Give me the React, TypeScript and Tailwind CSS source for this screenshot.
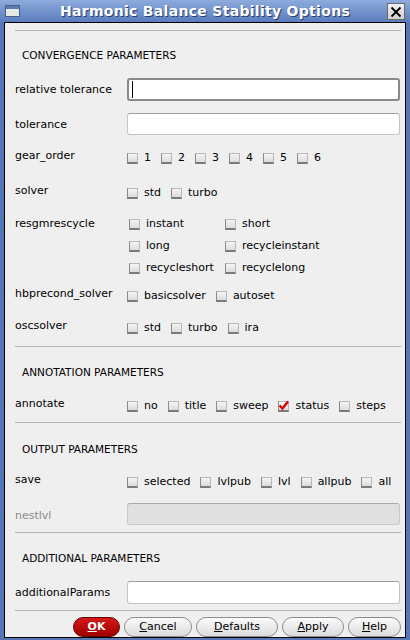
import React from "react"

const font = { fontFamily: '"DejaVu Sans", "Liberation Sans", sans-serif' }

function Box({ checked = false }: { checked?: boolean }) {
  return (
    <span className="relative inline-block w-[11px] h-[11px] shrink-0 bg-gradient-to-b from-[#f4f4f4] to-[#dcdcdc] border border-[#b8b8b8] border-b-2 border-b-[#7a7a7a] border-l-[#8a8a8a]">
      {checked && (
        <svg viewBox="0 0 11 11" className="absolute -left-px -top-[2px] w-[11px] h-[11px]">
          <path d="M1.5 5.5 L4.5 8.5 L10 1.5" fill="none" stroke="#d40000" strokeWidth="2.4" />
        </svg>
      )}
    </span>
  )
}

function Check({ label, checked }: { label: string; checked?: boolean }) {
  return (
    <span className="flex items-center gap-[6px]">
      <Box checked={checked} />
      <span>{label}</span>
    </span>
  )
}

function Heading({ text, mt }: { text: string; mt: string }) {
  return <div className={`pl-[17px] h-[20px] flex items-center text-[10.5px] ${mt}`}>{text}</div>
}

function Sep({ mt }: { mt: string }) {
  return <div className={`h-px bg-[#b4b4b4] ml-[10px] ${mt}`} />
}

function CheckRow({ label, items, mt, checkedIdx = -1 }: { label: string; items: string[]; mt: string; checkedIdx?: number }) {
  return (
    <div className={`flex h-[20px] ${mt}`}>
      <div className="w-[122px] pl-[10px] flex items-center">{label}</div>
      <div className="flex items-center gap-[10px] pt-[5px]">
        {items.map((it, i) => (
          <Check key={it} label={it} checked={i === checkedIdx} />
        ))}
      </div>
    </div>
  )
}

function InputRow({ label, mt, h, focused, disabled }: { label: string; mt: string; h: string; focused?: boolean; disabled?: boolean }) {
  return (
    <div className={`flex items-center ${mt} ${h}`}>
      <div className={`w-[122px] pl-[10px] pt-[2px] ${disabled ? "text-[#8a8a8a] pt-[5px]" : ""}`}>{label}</div>
      <div
        className={`h-full w-[273px] rounded-[3px] flex items-center ${
          disabled
            ? "bg-[#e0e0e0] border border-[#c8c8c8] border-t-[#a8a8a8]"
            : focused
            ? "bg-white border-2 border-[#8a8a8a]"
            : "bg-white border border-[#c4c4c4] border-t-[#a0a0a0]"
        }`}
      >
        {focused && <span className="ml-[3px] w-px h-[17px] bg-black" />}
      </div>
    </div>
  )
}

function Btn({ children, w, ok }: { children: React.ReactNode; w: string; ok?: boolean }) {
  return (
    <div
      className={`${w} h-[20px] rounded-full flex items-center justify-center ${
        ok
          ? "bg-gradient-to-b from-[#d81818] to-[#a00000] border border-[#600000] text-white font-bold"
          : "bg-gradient-to-b from-[#fbfbfb] to-[#dcdcdc] border border-[#8c8c8c]"
      }`}
    >
      {children}
    </div>
  )
}

export default function App() {
  return (
    <div className="w-[410px] h-[640px] bg-[#5577b8] flex flex-col text-[11px] text-black" style={font}>
      {/* title bar */}
      <div className="h-[22px] shrink-0 relative flex items-center justify-center bg-gradient-to-b from-[#8eabdc] to-[#5a7dbe]">
        <div className="absolute left-[5px] top-[5px] w-[15px] h-[12px] border border-[#4a5f86] bg-[#e6e9e2]">
          <div className="h-[3px] bg-[#5d7bb0]" />
        </div>
        <span className="text-white font-bold text-[14px] tracking-[0.3px] [text-shadow:1px_1px_0_#2a3f70]">
          Harmonic Balance Stability Options
        </span>
        <div className="absolute right-[5px] top-[3px] w-[18px] h-[17px] bg-gradient-to-b from-[#f0f0f0] to-[#d0d0d0] border border-[#6a6a6a] flex items-center justify-center">
          <svg viewBox="0 0 12 12" className="w-[12px] h-[12px]">
            <path d="M1.5 1.5 L10.5 10.5 M10.5 1.5 L1.5 10.5" stroke="#000" strokeWidth="1.8" />
          </svg>
        </div>
      </div>

      {/* body */}
      <div className="flex-1 mx-[4px] mb-[4px] border border-black bg-[#efefef] flex flex-col pr-[4px]">
        <Sep mt="mt-[7px]" />
        <Heading text="CONVERGENCE PARAMETERS" mt="mt-[15px]" />
        <InputRow label="relative tolerance" mt="mt-[12px]" h="h-[23px]" focused />
        <InputRow label="tolerance" mt="mt-[12px]" h="h-[22px]" />
        <CheckRow label="gear_order" items={["1", "2", "3", "4", "5", "6"]} mt="mt-[11px]" />
        <CheckRow label="solver" items={["std", "turbo"]} mt="mt-[15px]" />

        <div className="flex mt-[13px]">
          <div className="w-[122px] pl-[10px] h-[20px] flex items-center">resgmrescycle</div>
          <div className="grid grid-cols-[96px_100px] pl-[2px] pt-[1px] gap-y-[3px]">
            {["instant", "short", "long", "recycleinstant", "recycleshort", "recyclelong"].map((t) => (
              <div key={t} className="h-[19px] flex items-center">
                <Check label={t} />
              </div>
            ))}
          </div>
        </div>

        <CheckRow label="hbprecond_solver" items={["basicsolver", "autoset"]} mt="mt-[6px]" />
        <CheckRow label="oscsolver" items={["std", "turbo", "ira"]} mt="mt-[12px]" />
        <Sep mt="mt-[10px]" />
        <Heading text="ANNOTATION PARAMETERS" mt="mt-[16px]" />
        <CheckRow label="annotate" items={["no", "title", "sweep", "status", "steps"]} mt="mt-[11px]" checkedIdx={3} />
        <Sep mt="mt-[8px]" />
        <Heading text="OUTPUT PARAMETERS" mt="mt-[17px]" />
        <CheckRow label="save" items={["selected", "lvlpub", "lvl", "allpub", "all"]} mt="mt-[10px]" />
        <InputRow label="nestlvl" mt="mt-[13px]" h="h-[22px]" disabled />
        <Sep mt="mt-[7px]" />
        <Heading text="ADDITIONAL PARAMETERS" mt="mt-[16px]" />
        <InputRow label="additionalParams" mt="mt-[12px]" h="h-[23px]" />
        <Sep mt="mt-[6px]" />

        <div className="flex justify-end gap-[4px] mt-[6px]">
          <Btn w="w-[47px]" ok>
            <span className="underline">O</span>K
          </Btn>
          <Btn w="w-[68px]">
            <span className="underline">C</span>ancel
          </Btn>
          <Btn w="w-[82px]">
            <span className="underline">D</span>efaults
          </Btn>
          <Btn w="w-[62px]">
            <span className="underline">A</span>pply
          </Btn>
          <Btn w="w-[53px]">
            <span className="underline">H</span>elp
          </Btn>
        </div>
      </div>
    </div>
  )
}
